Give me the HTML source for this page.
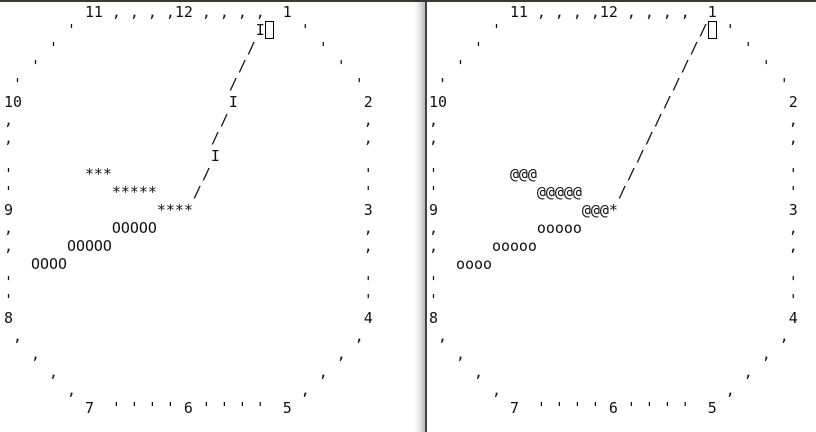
<!DOCTYPE html>
<html><head><meta charset="utf-8"><style>
html,body{margin:0;padding:0;background:#fff;width:816px;height:432px;overflow:hidden;position:relative}
.top{position:absolute;left:0;top:0;width:816px;height:2px;background:#3a3a35}
.shade{position:absolute;left:414px;top:2px;width:11px;height:430px;background:linear-gradient(to right,#fff,#e6e6e6 50%,#b8b8b8)}
.line{position:absolute;left:425px;top:2px;width:2px;height:430px;background:#444}
pre{position:absolute;top:3px;margin:0;font-family:"DejaVu Sans Mono","Liberation Mono",monospace;font-size:14.95px;line-height:18px;color:#111}
.c{display:inline-block;width:7px;height:16px;border:1px solid #000;vertical-align:-4px;box-sizing:content-box;margin-right:0}
</style></head><body>
<div class="top"></div><div class="shade"></div><div class="line"></div>
<pre style="left:4px">         11 , , , ,12 , , , ,  1
       '                    I<span class="c"></span>   '
     '                     /       '
   '                      /          '
 '                       /             '
10                       I              2
,                       /               ,
,                      /                ,
                       I
'        ***          /                 '
'           *****    /                  '
9                ****                   3
,           OOOOO                       ,
,      OOOOO                            ,
   OOOO
'                                       '
'                                       '
8                                       4
 ,                                     ,
   ,                                 ,
     ,                             ,
       ,                         ,
         7  ' ' ' ' 6 ' ' ' '  5</pre>
<pre style="left:429px">         11 , , , ,12 , , , ,  1
       '                      /<span class="c"></span> '
     '                       /     '
   '                        /        '
 '                         /           '
10                        /             2
,                        /              ,
,                       /               ,
                       /
'        @@@          /                 '
'           @@@@@    /                  '
9                @@@*                   3
,           ooooo                       ,
,      ooooo                            ,
   oooo
'                                       '
'                                       '
8                                       4
 ,                                     ,
   ,                                 ,
     ,                             ,
       ,                         ,
         7  ' ' ' ' 6 ' ' ' '  5</pre>
</body></html>
